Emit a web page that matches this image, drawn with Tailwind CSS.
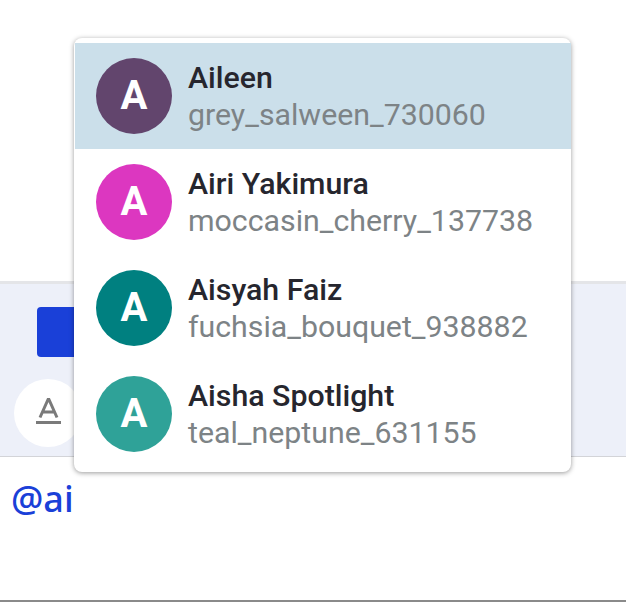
<!DOCTYPE html>
<html lang="en">
<head>
  <meta charset="UTF-8">
  <title>Mention picker</title>
  <script src="https://cdn.jsdelivr.net/npm/@tailwindcss/browser@4"></script>
</head>
<body class="bg-white font-['Roboto',sans-serif] overflow-hidden">
  <div class="relative w-[626px] h-[602px] flex flex-col bg-white">
    <div class="h-[281px] bg-white"></div>
    <!-- toolbar -->
    <div class="h-[176px] bg-[#edf0f9] border-t-[3px] border-t-[#e4e5e8] border-b border-b-[#d3d4d8] pl-[14px] pt-[23px] flex flex-col">
      <div class="w-[60px] h-[50px] ml-[23px] bg-[#1a40d8] rounded-[4px]"></div>
      <div class="mt-[22px] w-[68px] h-[68px] rounded-full bg-white flex items-center justify-center">
        <svg width="25" height="26" viewBox="0 0 25 26" fill="none" class="mb-[4px]">
          <path d="M4 19.5 L12.5 0.5 L21 19.5 M6.8 14 H18.2" stroke="#7a7a7a" stroke-width="3"/>
          <rect x="0" y="23" width="25" height="3" fill="#7a7a7a"/>
        </svg>
      </div>
    </div>
    <!-- editor -->
    <div class="flex-1 bg-white pl-[11px] pt-[20px] text-[36px] leading-[44px] font-medium text-[#1a40d8] font-['Noto_Sans',sans-serif] border-b-2 border-b-[#8a8a8a]">@ai</div>

    <!-- mention menu -->
    <div class="absolute left-[74px] top-[38px] w-[497px] h-[434px] bg-white rounded-[8px] pt-[5px] shadow-[0_1px_5px_rgba(0,0,0,0.4)]">
      <div class="h-[106px] ml-px flex items-center gap-[16px] pl-[21px] bg-[#cbdfea]">
        <div class="w-[76px] h-[76px] shrink-0 rounded-full bg-[#62456d] flex items-center justify-center text-white text-[40px] font-bold">A</div>
        <div class="leading-[37px] mb-[1px]">
          <div class="text-[30.3px] font-medium text-[#26262e]">Aileen</div>
          <div class="text-[30.3px] text-[#7d8386]">grey_salween_730060</div>
        </div>
      </div>
      <div class="h-[106px] flex items-center gap-[16px] pl-[22px]">
        <div class="w-[76px] h-[76px] shrink-0 rounded-full bg-[#dc37c0] flex items-center justify-center text-white text-[40px] font-bold">A</div>
        <div class="leading-[37px] mb-[1px]">
          <div class="text-[30.3px] font-medium text-[#26262e]">Airi Yakimura</div>
          <div class="text-[30.3px] text-[#7d8386]">moccasin_cherry_137738</div>
        </div>
      </div>
      <div class="h-[106px] flex items-center gap-[16px] pl-[22px]">
        <div class="w-[76px] h-[76px] shrink-0 rounded-full bg-[#008080] flex items-center justify-center text-white text-[40px] font-bold">A</div>
        <div class="leading-[37px] mb-[1px]">
          <div class="text-[30.3px] font-medium text-[#26262e]">Aisyah Faiz</div>
          <div class="text-[30.3px] text-[#7d8386]">fuchsia_bouquet_938882</div>
        </div>
      </div>
      <div class="h-[106px] flex items-center gap-[16px] pl-[22px]">
        <div class="w-[76px] h-[76px] shrink-0 rounded-full bg-[#2fa298] flex items-center justify-center text-white text-[40px] font-bold">A</div>
        <div class="leading-[37px] mb-[1px]">
          <div class="text-[30.3px] font-medium text-[#26262e]">Aisha Spotlight</div>
          <div class="text-[30.3px] text-[#7d8386]">teal_neptune_631155</div>
        </div>
      </div>
    </div>
  </div>
</body>
</html>
